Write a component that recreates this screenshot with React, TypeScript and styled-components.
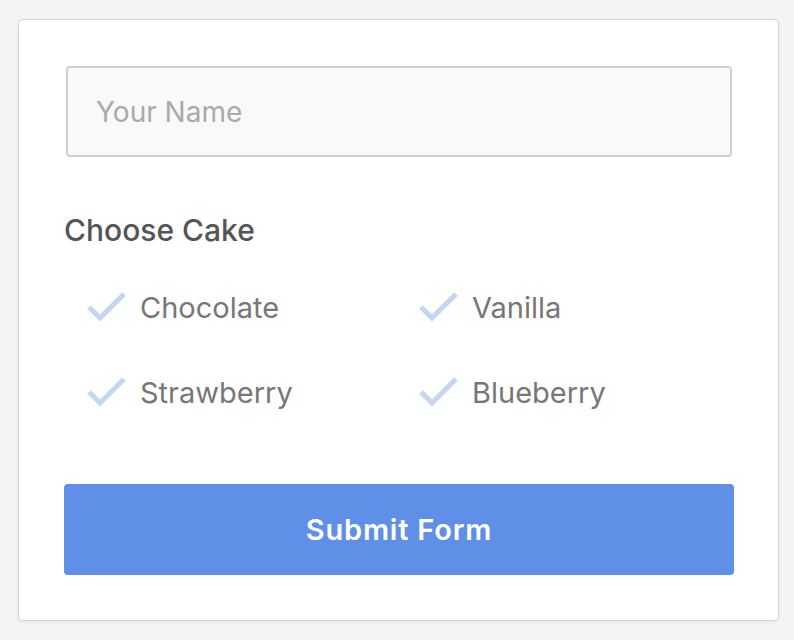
import React, { FC } from 'react'
import styled, { createGlobalStyle } from 'styled-components'

const GlobalStyle = createGlobalStyle`
  body {
    margin: 0;
    background: #f3f4f6;
    font-family: Inter, "Noto Sans", "Liberation Sans", sans-serif;
  }
`

const cakes = ['Chocolate', 'Vanilla', 'Strawberry', 'Blueberry']

const Check: FC = () => (
  <svg width="40" height="32" viewBox="0 0 40 32" fill="none">
    <path d="M2 15 L13 26 L37 2" stroke="#c3d6f4" strokeWidth="5" strokeLinejoin="miter" />
  </svg>
)

const App: FC = () => {
  return (
    <Page>
      <GlobalStyle />
      <Card>
        <NameInput placeholder="Your Name" />
        <Label>Choose Cake</Label>
        <Options>
          {cakes.map((c) => (
            <Option key={c}>
              <Check />
              <OptionText>{c}</OptionText>
            </Option>
          ))}
        </Options>
        <Submit>Submit Form</Submit>
      </Card>
    </Page>
  )
}

const Page = styled.div`
  width: 794px;
  height: 640px;
  padding: 19px 16px 0 18px;
  box-sizing: border-box;
`
const Card = styled.div`
  width: 761px;
  height: 602px;
  box-sizing: border-box;
  background: #fff;
  border: 1px solid #d4d5d8;
  border-radius: 5px;
  box-shadow: 0 1px 4px rgba(0, 0, 0, 0.06);
  padding: 46px 44px 0 45px;
  display: flex;
  flex-direction: column;
`
const NameInput = styled.input`
  margin: 0 2px;
  height: 91px;
  box-sizing: border-box;
  border: 2px solid #d0d0d0;
  border-radius: 4px;
  background: #f9f9f9;
  padding: 0 28px;
  font-family: inherit;
  font-size: 28px;
  color: #555;
  outline: none;
  &::placeholder {
    color: #aaaaaa;
  }
`
const Label = styled.div`
  margin-top: 56px;
  font-size: 30px;
  font-weight: 500;
  color: #555;
  line-height: 34px;
`
const Options = styled.div`
  display: grid;
  grid-template-columns: 332px 1fr;
  row-gap: 53px;
  margin-top: 45px;
  padding-left: 23px;
`
const Option = styled.div`
  display: flex;
  align-items: center;
  gap: 13px;
  height: 32px;
`
const OptionText = styled.span`
  font-size: 29px;
  line-height: 32px;
  color: #777;
`
const Submit = styled.button`
  margin-top: 75px;
  height: 91px;
  border: none;
  border-radius: 4px;
  background: #5f8fe7;
  color: #fff;
  font-family: inherit;
  font-size: 29px;
  font-weight: 600;
  letter-spacing: 0.8px;
  cursor: pointer;
`

export default App
